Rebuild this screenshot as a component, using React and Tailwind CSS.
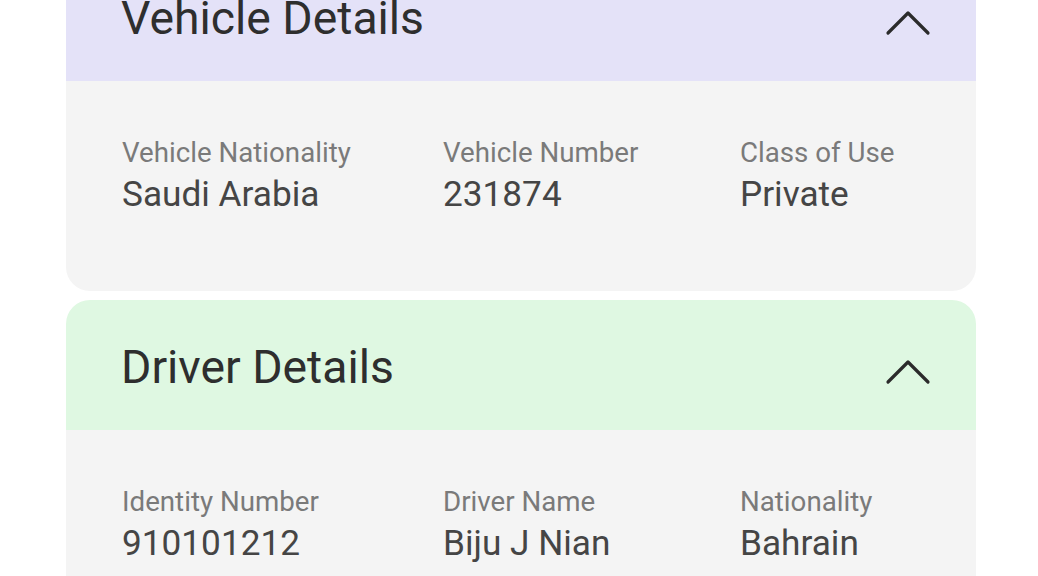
import React from "react";

function Chevron() {
  return (
    <svg width="46" height="26" viewBox="0 0 46 26" className="mt-[14px] shrink-0" fill="none">
      <polyline points="3,23 23,3 43,23" stroke="#2b2b2b" strokeWidth="3.2" strokeLinecap="round" strokeLinejoin="round" />
    </svg>
  );
}

function Field({ label, value, w }) {
  return (
    <div className={w}>
      <div className="text-[27.7px] leading-[34px] text-[#7a7a7a]">{label}</div>
      <div className="mt-[3px] text-[35.2px] leading-[42px] text-[#454545]">{value}</div>
    </div>
  );
}

function Card({ title, headerBg, fields }) {
  return (
    <div className="rounded-[24px] overflow-hidden">
      <div className={`h-[130px] flex items-center justify-between pl-[55px] pr-[45px] ${headerBg}`}>
        <div className="text-[46.3px] leading-[53px] mt-[4px] text-[#2e2e2e]">{title}</div>
        <Chevron />
      </div>
      <div className="bg-[#f4f4f4] pl-[56px] pt-[55px] pb-[76px] flex">
        <Field label={fields[0][0]} value={fields[0][1]} w="w-[321px]" />
        <Field label={fields[1][0]} value={fields[1][1]} w="w-[297px]" />
        <Field label={fields[2][0]} value={fields[2][1]} w="" />
      </div>
    </div>
  );
}

export default function App() {
  return (
    <div className="w-[1038px] h-[576px] overflow-hidden bg-white" style={{ fontFamily: "Roboto, sans-serif" }}>
      <div className="mt-[-49px] ml-[66px] w-[910px] flex flex-col gap-[9px]">
        <Card
          title="Vehicle Details"
          headerBg="bg-[#e4e2f8]"
          fields={[["Vehicle Nationality", "Saudi Arabia"], ["Vehicle Number", "231874"], ["Class of Use", "Private"]]}
        />
        <Card
          title="Driver Details"
          headerBg="bg-[#dff8e2]"
          fields={[["Identity Number", "910101212"], ["Driver Name", "Biju J Nian"], ["Nationality", "Bahrain"]]}
        />
      </div>
    </div>
  );
}
